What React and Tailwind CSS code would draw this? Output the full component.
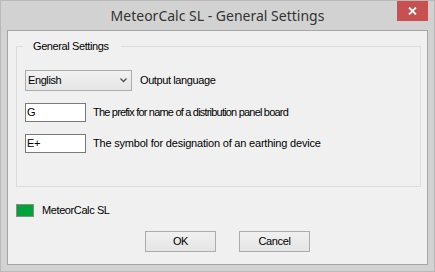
import React from "react";

export default function App() {
  const ui = { fontFamily: '"Liberation Sans", Arial, sans-serif' };
  return (
    <div className="w-[435px] h-[272px] bg-[#d2d2d2] border border-[#b9b9b9] flex flex-col overflow-hidden" style={ui}>
      {/* Title bar */}
      <div className="relative h-[29px] shrink-0 flex items-center justify-center">
        <span className="text-[14px] text-[#333333] leading-none mt-[1px]" style={{ fontFamily: '"Noto Sans", sans-serif' }}>
          MeteorCalc SL - General Settings
        </span>
        <div className="absolute right-[6px] top-[-1px] w-[31px] h-[21px] bg-[#c75050] flex items-center justify-center">
          <svg width="9" height="8" viewBox="0 0 9 8">
            <path d="M1 0.5 L8 7.5 M8 0.5 L1 7.5" stroke="#ffffff" strokeWidth="1.8" />
          </svg>
        </div>
      </div>
      {/* Client area */}
      <div className="ml-[6px] w-[421px] h-[235px] bg-[#f0f0f0] border border-[#a5a5a5] flex flex-col text-[11px] tracking-[-0.4px] text-black">
        {/* Group box */}
        <div className="relative ml-[8px] mt-[15px] w-[405px] h-[141px] border border-[#dcdcdc] shrink-0">
          <span className="absolute left-[6px] top-[-8px] bg-[#f0f0f0] pl-[10px] pr-[12px] leading-[14px]">
            General Settings
          </span>
          <div className="flex flex-col ml-[8px] mt-[23px]">
            <div className="flex items-center h-[21px]">
              <div className="w-[107px] h-[21px] border border-[#acacac] bg-gradient-to-b from-[#f2f2f2] to-[#e5e5e5] flex items-center justify-between pl-[2px] pr-[4px]">
                <span>English</span>
                <svg width="7" height="5" viewBox="0 0 7 5">
                  <path d="M0.5 0.5 L3.5 3.5 L6.5 0.5" stroke="#555555" strokeWidth="1.4" fill="none" />
                </svg>
              </div>
              <span className="ml-[8px]">Output language</span>
            </div>
            <div className="flex items-center h-[19px] mt-[12px]">
              <div className="w-[61px] h-[19px] border border-[#7a7a7a] bg-white flex items-center pl-[1px]">G</div>
              <span className="ml-[7px] tracking-[-0.8px]">The prefix for name of a distribution panel board</span>
            </div>
            <div className="flex items-center h-[19px] mt-[12px]">
              <div className="w-[61px] h-[19px] border border-[#7a7a7a] bg-white flex items-center pl-[1px]">E+</div>
              <span className="ml-[7px] tracking-[-0.2px]">The symbol for designation of an earthing device</span>
            </div>
          </div>
        </div>
        {/* Status row */}
        <div className="flex items-center ml-[8px] mt-[17px] h-[13px]">
          <div className="w-[18px] h-[13px] bg-[#00a23a] border border-[#8a8a8a]" />
          <span className="ml-[8px]">MeteorCalc SL</span>
        </div>
        {/* Buttons */}
        <div className="flex ml-[137px] mt-[14px] gap-[23px]">
          <div className="w-[71px] h-[21px] border border-[#acacac] bg-gradient-to-b from-[#f0f0f0] to-[#e5e5e5] flex items-center justify-center">OK</div>
          <div className="w-[71px] h-[21px] border border-[#acacac] bg-gradient-to-b from-[#f0f0f0] to-[#e5e5e5] flex items-center justify-center">Cancel</div>
        </div>
      </div>
    </div>
  );
}
